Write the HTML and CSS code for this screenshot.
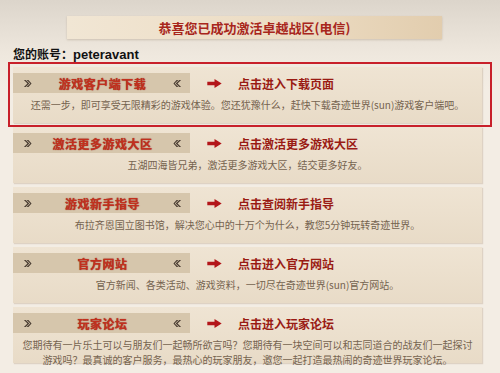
FILE: index.html
```html
<!DOCTYPE html>
<html lang="zh-CN">
<head>
  <meta charset="UTF-8" />
  <title>激活成功</title>
  <link rel="stylesheet" href="styles.css">
</head>
<body>

  <div class="banner">恭喜您已成功激活卓越战区(电信)</div>

  <div class="account">您的账号：<span>peteravant</span></div>

  <div class="highlight">
    <div class="card">
      <div class="row">
        <div class="tab">
          <svg class="orn" viewBox="0 0 10 10"><path d="M1 1 L5 5 L1 9 L3 9 L7 5 L3 1 Z M4 1 L8 5 L4 9 L6 9 L9.5 5 L6 1 Z" /></svg>
          <span class="tab-text">游戏客户端下载</span>
          <svg class="orn" viewBox="0 0 10 10"><path d="M9 1 L5 5 L9 9 L7 9 L3 5 L7 1 Z M6 1 L2 5 L6 9 L4 9 L0.5 5 L4 1 Z" /></svg>
        </div>
        <svg class="arrow" viewBox="0 0 16 10"><path d="M0 3 L8 3 L8 0 L16 5 L8 10 L8 7 L0 7 Z" /></svg>
        <a class="link">点击进入下载页面</a>
      </div>
      <p class="desc">还需一步，即可享受无限精彩的游戏体验。您还犹豫什么，赶快下载奇迹世界(sun)游戏客户端吧。</p>
    </div>
  </div>

  <div class="card">
    <div class="row">
      <div class="tab">
        <svg class="orn" viewBox="0 0 10 10"><path d="M1 1 L5 5 L1 9 L3 9 L7 5 L3 1 Z M4 1 L8 5 L4 9 L6 9 L9.5 5 L6 1 Z" /></svg>
        <span class="tab-text">激活更多游戏大区</span>
        <svg class="orn" viewBox="0 0 10 10"><path d="M9 1 L5 5 L9 9 L7 9 L3 5 L7 1 Z M6 1 L2 5 L6 9 L4 9 L0.5 5 L4 1 Z" /></svg>
      </div>
      <svg class="arrow" viewBox="0 0 16 10"><path d="M0 3 L8 3 L8 0 L16 5 L8 10 L8 7 L0 7 Z" /></svg>
      <a class="link">点击激活更多游戏大区</a>
    </div>
    <p class="desc">五湖四海皆兄弟，激活更多游戏大区，结交更多好友。</p>
  </div>

  <div class="card">
    <div class="row">
      <div class="tab">
        <svg class="orn" viewBox="0 0 10 10"><path d="M1 1 L5 5 L1 9 L3 9 L7 5 L3 1 Z M4 1 L8 5 L4 9 L6 9 L9.5 5 L6 1 Z" /></svg>
        <span class="tab-text">游戏新手指导</span>
        <svg class="orn" viewBox="0 0 10 10"><path d="M9 1 L5 5 L9 9 L7 9 L3 5 L7 1 Z M6 1 L2 5 L6 9 L4 9 L0.5 5 L4 1 Z" /></svg>
      </div>
      <svg class="arrow" viewBox="0 0 16 10"><path d="M0 3 L8 3 L8 0 L16 5 L8 10 L8 7 L0 7 Z" /></svg>
      <a class="link">点击查阅新手指导</a>
    </div>
    <p class="desc">布拉齐恩国立图书馆，解决您心中的十万个为什么，教您5分钟玩转奇迹世界。</p>
  </div>

  <div class="card">
    <div class="row">
      <div class="tab">
        <svg class="orn" viewBox="0 0 10 10"><path d="M1 1 L5 5 L1 9 L3 9 L7 5 L3 1 Z M4 1 L8 5 L4 9 L6 9 L9.5 5 L6 1 Z" /></svg>
        <span class="tab-text">官方网站</span>
        <svg class="orn" viewBox="0 0 10 10"><path d="M9 1 L5 5 L9 9 L7 9 L3 5 L7 1 Z M6 1 L2 5 L6 9 L4 9 L0.5 5 L4 1 Z" /></svg>
      </div>
      <svg class="arrow" viewBox="0 0 16 10"><path d="M0 3 L8 3 L8 0 L16 5 L8 10 L8 7 L0 7 Z" /></svg>
      <a class="link">点击进入官方网站</a>
    </div>
    <p class="desc">官方新闻、各类活动、游戏资料，一切尽在奇迹世界(sun)官方网站。</p>
  </div>

  <div class="card">
    <div class="row">
      <div class="tab">
        <svg class="orn" viewBox="0 0 10 10"><path d="M1 1 L5 5 L1 9 L3 9 L7 5 L3 1 Z M4 1 L8 5 L4 9 L6 9 L9.5 5 L6 1 Z" /></svg>
        <span class="tab-text">玩家论坛</span>
        <svg class="orn" viewBox="0 0 10 10"><path d="M9 1 L5 5 L9 9 L7 9 L3 5 L7 1 Z M6 1 L2 5 L6 9 L4 9 L0.5 5 L4 1 Z" /></svg>
      </div>
      <svg class="arrow" viewBox="0 0 16 10"><path d="M0 3 L8 3 L8 0 L16 5 L8 10 L8 7 L0 7 Z" /></svg>
      <a class="link">点击进入玩家论坛</a>
    </div>
    <p class="desc">您期待有一片乐土可以与朋友们一起畅所欲言吗？您期待有一块空间可以和志同道合的战友们一起探讨<br>游戏吗？最真诚的客户服务，最热心的玩家朋友，邀您一起打造最热闹的奇迹世界玩家论坛。</p>
  </div>

</body>
</html>
```

FILE: styles.css
```css
body {
  margin: 0;
  padding-top: 16px;
  font-family: "Noto Sans CJK SC", "Noto Sans", sans-serif;
  background: linear-gradient(#dcd5cb, #efe8de 55px, #f3ede4 90px);
  background-color: #f3ede4;
  overflow: hidden;
  height: 373px;
  box-sizing: border-box;
}

.banner {
  margin-left: 67px;
  width: 375px;
  height: 23px;
  line-height: 23px;
  text-align: center;
  font-size: 13px;
  font-weight: bold;
  color: #a8261c;
  background: linear-gradient(to right, #f1e6d4, #ecdcc3 60%, #e2cdae);
  box-shadow: 0 1px 2px rgba(120, 90, 60, 0.25);
}

.account {
  margin: 7px 0 0 13px;
  height: 16px;
  line-height: 16px;
  font-size: 12px;
  font-weight: bold;
  color: #111;
}

.account span {
  font-family: "Liberation Sans", sans-serif;
  font-size: 13px;
}

.highlight {
  margin: 0 8px;
  padding: 3px 8px 2px 3px;
  border: 2px solid #c8202a;
}

.card {
  margin-left: 13px;
  width: 469px;
  height: 56px;
  margin-bottom: 4px;
  padding-top: 6px;
  box-sizing: border-box;
  background: linear-gradient(#efe4d3, #e8dbc7);
  box-shadow: 1px 1px 1px rgba(160, 130, 100, 0.25);
}

.highlight .card {
  margin: 0;
}

.row {
  display: flex;
  align-items: center;
  height: 20px;
}

.tab {
  display: flex;
  align-items: center;
  justify-content: space-between;
  width: 177px;
  height: 20px;
  padding: 0 8px 0 10px;
  box-sizing: border-box;
  background: #d6c6ac;
}

.orn {
  width: 9px;
  height: 9px;
  fill: #4a3d32;
}

.tab-text {
  font-size: 12px;
  font-weight: bold;
  letter-spacing: 0.5px;
  color: #c2301e;
  text-shadow: 0 0 1px #8a2a1a;
}

.arrow {
  width: 15px;
  height: 9px;
  margin-left: 17px;
  fill: #b3161a;
}

.link {
  margin-left: 16px;
  font-size: 12px;
  font-weight: bold;
  color: #9a1b14;
}

.desc {
  margin: 4px 0 0;
  text-align: center;
  font-size: 10px;
  line-height: 15px;
  color: #75634f;
  white-space: nowrap;
}
```
